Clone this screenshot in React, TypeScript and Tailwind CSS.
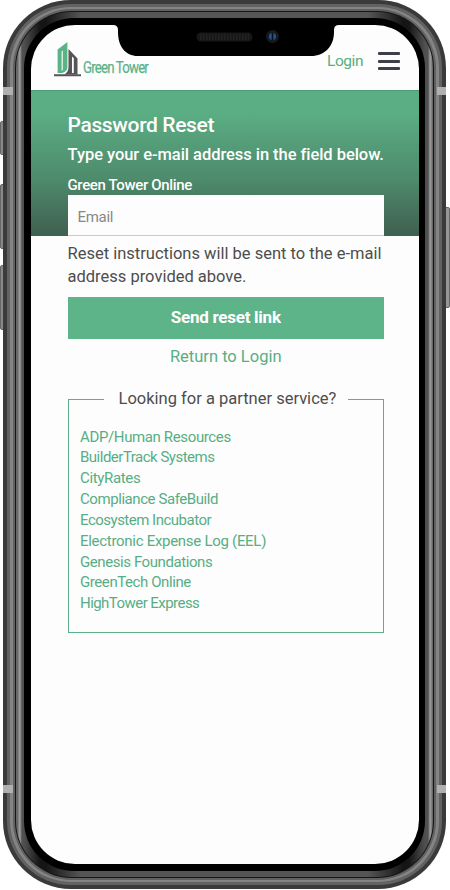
import React from "react";

const partners: [string, string][] = [
  ["ADP/Human Resources", "tracking-[-0.37px]"],
  ["BuilderTrack Systems", "tracking-[-0.5px]"],
  ["CityRates", "tracking-[-0.35px]"],
  ["Compliance SafeBuild", "tracking-[-0.43px]"],
  ["Ecosystem Incubator", "tracking-[-0.5px]"],
  ["Electronic Expense Log (EEL)", "tracking-[-0.29px]"],
  ["Genesis Foundations", "tracking-[-0.42px]"],
  ["GreenTech Online", "tracking-[-0.42px]"],
  ["HighTower Express", "tracking-[-0.55px]"],
];

function TowerLogo() {
  return (
    <svg width="28" height="36" viewBox="0 0 28 36" className="shrink-0">
      <path d="M3.600 8.500 13.400 1v24.500C13.400 29.500 11 31.500 7.500 32H3.600Z" fill="#5ab287" />
      <path d="M7.500 10.500 9 9.200V28.500L7.500 30Z" fill="#d5ecdf" />
      <path d="M14.500 8 23.500 17.500V33.500H9.500c3.500-1 5-4 5-8Z" fill="#555558" />
      <path d="M18 15.500 19.800 17.300V32H18Z" fill="#fdfdfd" />
      <path d="M0 33.300h27v2H0Z" fill="#555558" />
    </svg>
  );
}

function Notch() {
  return (
    <div className="absolute inset-x-0 top-0 flex justify-center">
      <svg width="228" height="31" viewBox="0 0 228 31">
        <path d="M0 0h228q-5 0-5 5v2C223 21 214 31 200 31H27C14 31 7 21 7 7V5Q7 0 2 0Z" fill="#000" />
        <rect x="85.500" y="7.500" width="56" height="9" rx="4.500" fill="#171717" />
        <path d="M89 12h49" stroke="#222" strokeWidth="6" strokeDasharray="1.500 1.500" />
        <circle cx="161.500" cy="11.500" r="6.500" fill="#18191d" />
        <circle cx="161.500" cy="11.500" r="3.600" fill="#245485" />
        <path d="M161.500 8v7" stroke="#06101e" strokeWidth="1.600" />
      </svg>
    </div>
  );
}

function Screen() {
  return (
    <main className="relative flex h-[839px] w-[388px] flex-col overflow-hidden rounded-[44px] bg-[#fdfdfd]">
      <header className="flex h-[65px] shrink-0 items-start justify-between pl-[23px] pr-[19.500px] pt-[16px]">
        <div className="flex gap-px">
          <TowerLogo />
          <span className="w-[66px] origin-left scale-x-[0.8] whitespace-nowrap pt-[17px] text-[16.500px] leading-[20px] tracking-[-1px] text-[#5ab287] [-webkit-text-stroke:0.25px_#5ab287]">Green Tower</span>
        </div>
        <nav className="flex gap-[15px] pt-[10px]">
          <a className="text-[15.500px] leading-[20px] tracking-[-0.45px] text-[#58ae84]">Login</a>
          <div className="flex w-[21.500px] flex-col gap-[4.500px] pt-px">
            <i className="h-[3px] rounded-[1px] bg-[#3e3f4a]" />
            <i className="h-[3px] rounded-[1px] bg-[#3e3f4a]" />
            <i className="h-[3px] rounded-[1px] bg-[#3e3f4a]" />
          </div>
        </nav>
      </header>
      <section className="flex h-[146px] shrink-0 flex-col border-t border-[#4d9a75] bg-linear-to-b from-[#5bad84] from-15% via-[#4d8c6c] via-60% to-[#405f50] pl-[36.500px] pr-[35px] pt-[21px] text-white">
        <h1 className="whitespace-nowrap text-[21px] font-medium leading-[26px] tracking-[-0.35px]">Password Reset</h1>
        <p className="pt-[4px] whitespace-nowrap text-[16.500px] font-medium leading-[25px] tracking-[-0.05px]">Type your e-mail address in the field below.</p>
        <p className="pt-[8px] whitespace-nowrap text-[15px] font-medium leading-[20px] tracking-[-0.35px]">Green Tower Online</p>
        <div className="h-[41px] border-b border-[#c7cbc9] bg-[#fdfdfd] pl-[10px] pt-[12px] text-[15px] leading-[20px] tracking-[-0.3px] text-[#888]">Email</div>
      </section>
      <section className="flex flex-col pl-[36.500px] pr-[35px] pt-[6px]">
        <p className="whitespace-nowrap text-[16.500px] leading-[23px] text-[#4d4d4d]">
          Reset instructions will be sent to the e-mail
          <br />
          address provided above.
        </p>
        <button className="mt-[9px] h-[42px] w-full bg-[#5db489] pb-[1px] text-[17px] font-bold tracking-[-0.25px] text-white">Send reset link</button>
        <a className="mt-[6px] text-center text-[16.500px] leading-[24px] text-[#58ae84]">Return to Login</a>
        <fieldset className="mt-[17px] h-[247px] border border-[#5fae8b] pl-[11.500px]">
          <legend className="ml-[23.500px] h-[27px] w-[244px] whitespace-nowrap pl-[15px] text-[16.500px] leading-[25px] text-[#4d4d4d]">Looking for a partner service?</legend>
          <ul className="pt-[13.500px]">
            {partners.map(([name, tracking]) => (
              <li key={name} className={`h-[20.850px] whitespace-nowrap text-[15px] leading-[20.850px] text-[#58ad84] ${tracking}`}>{name}</li>
            ))}
          </ul>
        </fieldset>
      </section>
      <Notch />
    </main>
  );
}

function SideButtons() {
  return (
    <>
      <i className="absolute left-0 top-[121px] h-[34px] w-[4px] rounded-l-[2px] border border-[#666] bg-[#888]" />
      <i className="absolute left-0 top-[184px] h-[65px] w-[4px] rounded-l-[2px] border border-[#666] bg-[#888]" />
      <i className="absolute left-0 top-[265px] h-[65px] w-[4px] rounded-l-[2px] border border-[#666] bg-[#888]" />
      <i className="absolute left-[445px] top-[207px] h-[101px] w-[5px] rounded-r-[2px] border border-[#666] bg-[#979794]" />
    </>
  );
}

function AntennaBands() {
  return (
    <div className="absolute inset-y-0 left-[3px] flex w-[443px] flex-col justify-between pb-[97px] pt-[87px]">
      <div className="flex justify-between">
        <i className="h-[8px] w-[10px] bg-[#b0b0b0]" />
        <i className="h-[8px] w-[9px] bg-[#b0b0b0]" />
      </div>
      <div className="flex justify-between">
        <i className="h-[8px] w-[10px] bg-[#b0b0b0]" />
        <i className="h-[8px] w-[9px] bg-[#b0b0b0]" />
      </div>
    </div>
  );
}

export default function App() {
  return (
    <div className="relative h-[890px] w-[450px] overflow-hidden bg-white pl-[3px] font-[Roboto,sans-serif]">
      <SideButtons />
      <div className="relative h-[889px] w-[443px] rounded-[68px] bg-[#3a3a3a] px-[4px] py-[4px]">
        <div className="h-full rounded-[64px] bg-[#626262] px-[3px] py-[3px]">
          <div className="h-full rounded-[61px] bg-[#848484] px-[3px] py-[2px]">
            <div className="h-full rounded-[59px] bg-[#606060] px-[2px] py-[2px]">
              <div className="h-full rounded-[57px] bg-[#161616] p-px">
                <div className="h-full rounded-[56px] bg-[linear-gradient(90deg,#686868_0_2px,#999_3px_4px,#777_5px,#505050_6px_8px,#151515_24px,#151515_30px,#555_65px,#555_calc(100%-65px),#151515_calc(100%-30px),#151515_calc(100%-24px),#505050_calc(100%-8px)_calc(100%-5px),#777_calc(100%-4px),#999_calc(100%-3px)_calc(100%-2px),#686868_calc(100%-1px))] px-[8px] py-[6px]">
                  <div className="h-full rounded-[50px] bg-black px-[7px] pt-[7px]">
                    <Screen />
                  </div>
                </div>
              </div>
            </div>
          </div>
        </div>
      </div>
      <AntennaBands />
    </div>
  );
}
